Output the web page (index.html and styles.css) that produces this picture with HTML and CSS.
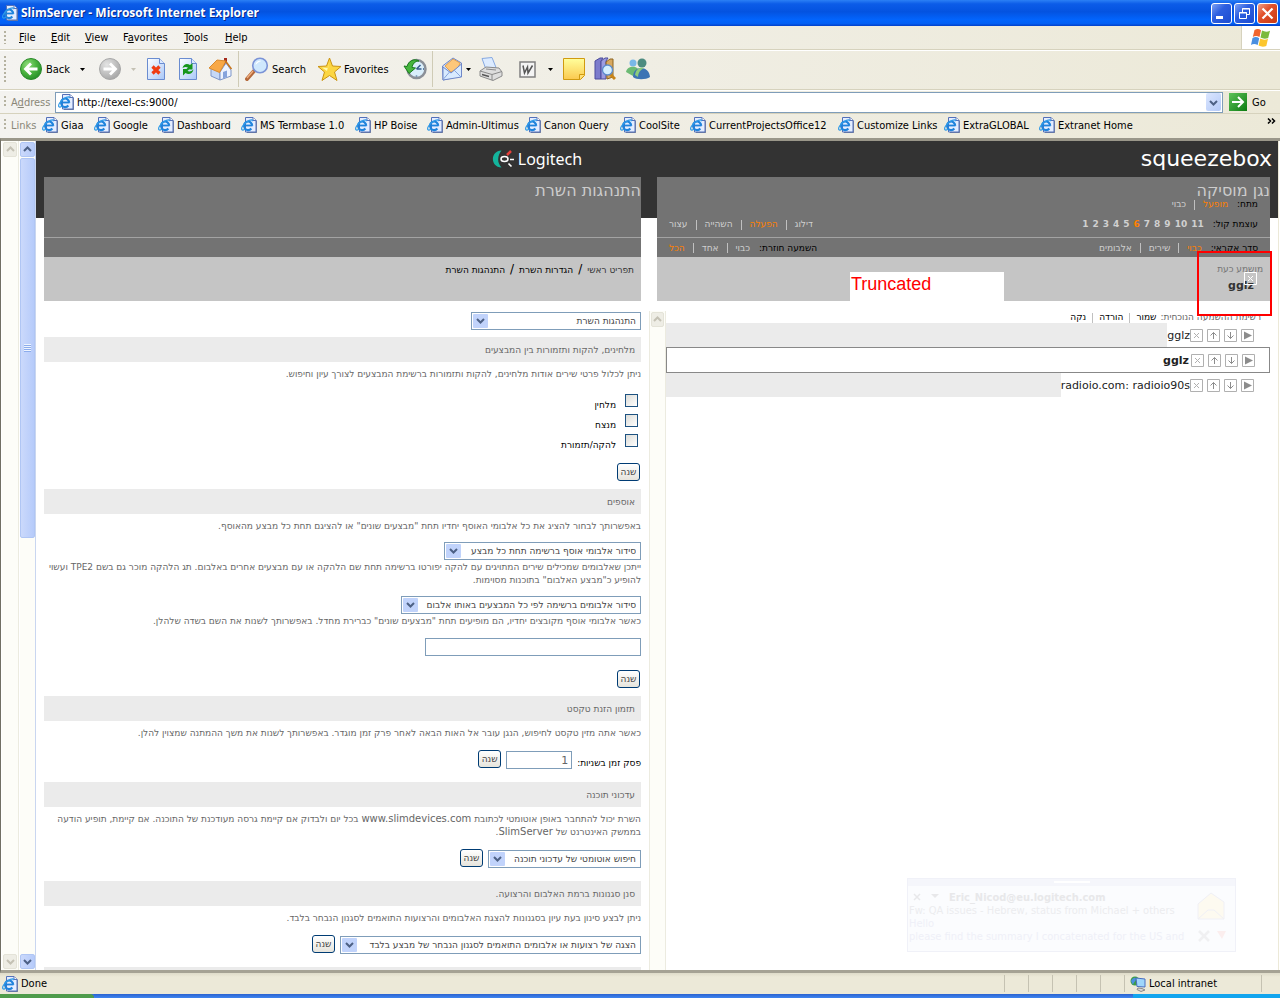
FILE: index.html
```html
<!DOCTYPE html>
<html lang="en">
<head>
<meta charset="utf-8">
<title>SlimServer - Microsoft Internet Explorer</title>
<link rel="stylesheet" href="styles.css">
</head>
<body>
<svg class="defs" aria-hidden="true">
  <defs>
    <linearGradient id="gBlue" x1="0" y1="0" x2="1" y2="1"><stop offset="0" stop-color="#fff"/><stop offset="1" stop-color="#a9c8f8"/></linearGradient>
    <radialGradient id="gGreen" cx=".35" cy=".3" r=".8"><stop offset="0" stop-color="#8fdc7c"/><stop offset=".5" stop-color="#4cb440"/><stop offset="1" stop-color="#1f8a24"/></radialGradient>
    <radialGradient id="gGray" cx=".35" cy=".3" r=".8"><stop offset="0" stop-color="#e4e4e4"/><stop offset="1" stop-color="#a2a2a2"/></radialGradient>
    <linearGradient id="gGold" x1="0" y1="0" x2="0" y2="1"><stop offset="0" stop-color="#ffff9c"/><stop offset="1" stop-color="#fbc94f"/></linearGradient>
    <linearGradient id="gGo" x1="0" y1="0" x2="1" y2="1"><stop offset="0" stop-color="#5fc25b"/><stop offset="1" stop-color="#0b7c10"/></linearGradient>
    <symbol id="ie" viewBox="0 0 16 16">
      <path d="M5.500.5h7l3 3v12h-10z" transform="translate(.4 .4)" fill="#6f7a9a"/>
      <path d="M4.500.5h7.500l3 3v11.500H4.500z" fill="#e4edff" stroke="#5470b8"/>
      <path d="M12 .5v3h3" fill="#fff" stroke="#5470b8"/>
      <path d="M3 8.500h8.500" stroke="#1f83dc" stroke-width="1.800"/>
      <path d="M11.200 8.800A4.100 4.300 0 1 0 10.300 11.500" fill="none" stroke="#1f83dc" stroke-width="2.200"/>
      <path d="M11 4.100C13 2.500 9.500 2.300 5.800 4.800 2.300 7.200-.2 11 .9 12.600c.6.900 2 .3 3-.3" fill="none" stroke="#2f9ae8" stroke-width="1.200"/>
    </symbol>
    <symbol id="up" viewBox="0 0 9 9"><path d="M1 6l3.500-3.500L8 6" fill="none" stroke="currentColor" stroke-width="2"/></symbol>
    <symbol id="down" viewBox="0 0 9 9"><path d="M1 3l3.500 3.500L8 3" fill="none" stroke="currentColor" stroke-width="2"/></symbol>
    <symbol id="caret" viewBox="0 0 5 3"><path d="M0 0h5L2.500 3z" fill="currentColor"/></symbol>
    <symbol id="tX" viewBox="0 0 13 13"><path d="M.5.5h12v12H.5zM4 4l5 5M9 4L4 9" fill="none" stroke="currentColor"/></symbol>
    <symbol id="tUp" viewBox="0 0 13 13"><path d="M.5.5h12v12H.5z" fill="none" stroke="#b0b0b0"/><path d="M6.500 10V3.500M3.500 6.500l3-3 3 3" fill="none" stroke="#8c8c8c"/></symbol>
    <symbol id="tDown" viewBox="0 0 13 13"><path d="M.5.5h12v12H.5z" fill="none" stroke="#b0b0b0"/><path d="M6.500 3v6.500M3.500 6.500l3 3 3-3" fill="none" stroke="#8c8c8c"/></symbol>
    <symbol id="tPlay" viewBox="0 0 13 13"><path d="M.5.5h12v12H.5z" fill="none" stroke="#b0b0b0"/><path d="M3 2.500L11 6.500 3 10.500z" fill="#8c8c8c"/></symbol>
  </defs>
</svg>
<div class="window">
  <header class="titlebar">
    <svg class="i16"><use href="#ie"/></svg>
    <h1>SlimServer - Microsoft Internet Explorer</h1>
    <button class="cap" aria-label="Minimize"><svg width="19" height="19"><path d="M4 12h7v3H4z" fill="#fff"/></svg></button>
    <button class="cap" aria-label="Restore"><svg width="19" height="19"><path d="M7.500 8V4.500h7v6H12M7 5h8" fill="none" stroke="#fff"/><path d="M4.500 8.500h7v6h-7zM4 9h8" fill="none" stroke="#fff"/></svg></button>
    <button class="cap close" aria-label="Close"><svg width="19" height="19"><path d="M4.500 4.500l10 10M14.500 4.500l-10 10" stroke="#fff" stroke-width="2.200"/></svg></button>
  </header>
  <nav class="menubar">
    <i class="grip"></i>
    <div class="menus">
      <a href="#"><u>F</u>ile</a><a href="#"><u>E</u>dit</a><a href="#"><u>V</u>iew</a><a href="#">F<u>a</u>vorites</a><a href="#"><u>T</u>ools</a><a href="#"><u>H</u>elp</a>
    </div>
    <div class="flag"><svg width="22" height="20" viewBox="0 0 22 20">
      <path d="M4.500 2Q8 0 11 2.200L9.500 9Q6 7 2.800 9z" fill="#f0642d"/><path d="M12 2.600q4 2 8 .2L18.200 10q-4 1.600-7.700-.4z" fill="#7cba3c"/>
      <path d="M2.500 10Q6 8 9.200 10.200L7.700 17Q4 15 1 17z" fill="#4a8fe0"/><path d="M10.200 10.600q4 2 7.800.2L16.300 18q-4 1.600-7.700-.4z" fill="#fcc62c"/></svg></div>
  </nav>
  <div class="toolbar">
    <i class="grip"></i>
    <div class="tools">
      <button><svg width="24" height="24"><circle cx="12" cy="12" r="10.500" fill="url(#gGreen)" stroke="#2b8a2b"/><path d="M18.500 12H7M12 6.500L6.500 12l5.500 5.500" fill="none" stroke="#fff" stroke-width="2.800"/></svg>Back</button>
      <button class="mid" aria-label="Back list"><svg class="car"><use href="#caret"/></svg></button>
      <button class="mid" aria-label="Forward"><svg width="24" height="24"><circle cx="12" cy="12" r="10.500" fill="url(#gGray)" stroke="#a8a8a8"/><path d="M5.500 12H17M12 6.500l5.500 5.500-5.500 5.500" fill="none" stroke="#fff" stroke-width="2.800"/></svg></button>
      <button class="mid off" aria-label="Forward list"><svg class="car"><use href="#caret"/></svg></button>
      <button class="mid" aria-label="Stop"><svg width="20" height="24"><path d="M1.500 1.500h12l5 5v16h-17z" fill="url(#gBlue)" stroke="#6a8cd0"/><path d="M13.500 1.500v5h5" fill="#dbe8ff" stroke="#6a8cd0"/><path d="M6.500 9.500l7 7M13.500 9.500l-7 7" stroke="#f03c12" stroke-width="3.200"/></svg></button>
      <button class="mid" aria-label="Refresh"><svg width="20" height="24"><path d="M1.500 1.500h12l5 5v16h-17z" fill="url(#gBlue)" stroke="#6a8cd0"/><path d="M13.500 1.500v5h5" fill="#dbe8ff" stroke="#6a8cd0"/><path d="M4.500 11c1-4.500 5-5 7.500-3l2.500-2v6.500H8l2-2c-2-1-3.500-.5-5.500.5zM15.500 12.500c-1 4.500-5 5.500-8 3.500L5 18.500V12h6.500l-2 2c2 1 4 .5 6-1.500z" fill="#17961c"/></svg></button>
      <button class="mid" aria-label="Home"><svg width="24" height="24"><path d="M16 1h3v7h-3z" fill="#a52b1c"/><path d="M3 11l9 4v8l-9-4z" fill="#c6d8f6" stroke="#7d95c8"/><path d="M12 15l6-9 5 7v6l-11 4z" fill="#eef4ff" stroke="#7d95c8"/><path d="M1 11L9 3l9 1-6.500 11.500z" fill="#f8a846" stroke="#d88a30"/><path d="M17.500 4l6 8" stroke="#c87418" stroke-width="1.500"/><path d="M15 15l4-1.500V20l-4 1.500z" fill="#86a4dc"/></svg></button>
      <i class="sep"></i>
      <button class="pad"><svg width="24" height="24"><path d="M2 22l7-8" stroke="#b4683a" stroke-width="4" stroke-linecap="round"/><path d="M2 21l6-7" stroke="#f0b080" stroke-width="1.300"/><circle cx="15" cy="8.500" r="7.300" fill="#cfe8fd" stroke="#7b93d6" stroke-width="1.600"/><path d="M10.500 8c0-3 3-5 6-4-2 .5-4 1.500-6 4z" fill="#fff"/></svg>Search</button>
      <button class="pad star"><svg width="25" height="25"><path d="M12.500 1l3 8 8.500.5-6.500 5.500 2.500 8.500-7.500-5-7.500 5L7.500 15 1 9.500l8.500-.5z" fill="#fcd642" stroke="#cb9413"/><path d="M12.500 4l-1.500 7-6-.5 5 3.500z" fill="#fffbb0"/></svg>Favorites</button>
      <button class="mid" aria-label="History"><svg width="24" height="24"><circle cx="13.500" cy="12" r="9" fill="#d9eefb" stroke="#8b9098" stroke-width="2.500"/><path d="M13.500 12l4-4M13.500 12h5M13.500 18.500v1M20 12h1" stroke="#345c8c" stroke-width="1.500"/><path d="M1 9l3 .5C5.500 4 11 1 16 4c-4 0-6.500 3-7 6.500l3.500.5L6 16.500z" fill="#45b53d" stroke="#187a1c"/></svg></button>
      <i class="sep"></i>
      <button class="end" aria-label="Mail"><svg width="22" height="24"><path d="M1.500 9L12 1l8.500 5v13L2 23z" fill="#cfe0fb" stroke="#6f87c8"/><path d="M4 9l8-7 7 4-2 5-7 4z" fill="#fdc77a" stroke="#e0a050"/><path d="M2 10l8 6L20.500 7v13L2 23z" fill="#d8eaff" stroke="#6f87c8"/><path d="M2 22.500l7-8M20 20l-7-7" stroke="#86a4dc"/></svg></button>
      <button class="mid" aria-label="Mail list"><svg class="car"><use href="#caret"/></svg></button>
      <button class="mid" aria-label="Print"><svg width="24" height="24"><path d="M3 1.500l10-1 4 10-10 2z" fill="#dcebff" stroke="#86a8e0"/><path d="M1 14l6-4 13 1 3 4v4l-9 4.500L1 19z" fill="#dedede" stroke="#8a8a8a"/><path d="M1 14l12 3.500 10-3M13 17.500V23M7 12l10 1" fill="none" stroke="#8a8a8a"/><path d="M3 17.500l7 2" stroke="#555" stroke-width="1.500"/></svg></button>
      <button class="mid" aria-label="Edit with Word"><svg width="17" height="17"><path d="M1 1h15v15H1z" fill="#f4f4f4" stroke="#808080" stroke-width="1.500"/><path d="M4 4.500l1.500 7.500 3-6 .5 6 4.500-7.500" fill="none" stroke="#555" stroke-width="1.500"/></svg></button>
      <button class="mid" aria-label="Edit list"><svg class="car"><use href="#caret"/></svg></button>
      <button class="mid" aria-label="Discuss"><svg width="22" height="22"><path d="M.5.5h21v17l-4 4H.5z" fill="url(#gGold)" stroke="#d09a10"/><path d="M21.500 16.500h-5v5" fill="#ffe27a" stroke="#d09a10"/></svg></button>
      <button class="mid" aria-label="Research"><svg width="22" height="24"><path d="M1 4l5-3h3L7 4v18H1z" fill="#7c7ccc" stroke="#4c4c9c"/><path d="M7 4l4-3h3l-2 3v18H7z" fill="#9c9ce0" stroke="#4c4c9c"/><path d="M12 5l4-3h3v18l-6 2z" fill="#d8a860" stroke="#8c6420"/><path d="M16 17l5 5" stroke="#c88418" stroke-width="3"/><circle cx="13.500" cy="13" r="5" fill="#d4efff" stroke="#5c8ccc" stroke-width="1.300"/></svg></button>
      <button class="mid" aria-label="Messenger"><svg width="24" height="24"><circle cx="7" cy="6" r="3.500" fill="#79b8e8"/><path d="M0 15c1-7 13-7 13 0l-6 4z" fill="#6cba74"/><circle cx="16" cy="6" r="4.500" fill="#4d8c80"/><path d="M7 20c0-12 16-12 17 0-4 3-14 3-17 0z" fill="#3c74b4"/><path d="M9 18c1-7 6-8 9-7-4 2-6 5-6 9z" fill="#8ccc7c"/></svg></button>
    </div>
  </div>
  <form class="address">
    <i class="grip"></i>
    <label for="url">A<u>d</u>dress</label>
    <div class="urlbox"><svg class="i16"><use href="#ie"/></svg><input id="url" type="text" value="http://texel-cs:9000/"><button type="button" class="drop" aria-label="Show addresses"><svg width="9" height="9"><use href="#down"/></svg></button></div>
    <button type="button" class="go"><svg width="18" height="18"><path d="M0 0h18v18H0z" fill="url(#gGo)"/><path d="M3 9h10M9 4l5 5-5 5" fill="none" stroke="#fff" stroke-width="2"/></svg>Go</button>
  </form>
  <nav class="linksbar">
    <i class="grip"></i><span class="dim">Links</span>
    <div class="links">
      <a href="#"><svg class="i16"><use href="#ie"/></svg>Giaa</a>
      <a href="#"><svg class="i16"><use href="#ie"/></svg>Google</a>
      <a href="#"><svg class="i16"><use href="#ie"/></svg>Dashboard</a>
      <a href="#"><svg class="i16"><use href="#ie"/></svg>MS Termbase 1.0</a>
      <a href="#"><svg class="i16"><use href="#ie"/></svg>HP Boise</a>
      <a href="#"><svg class="i16"><use href="#ie"/></svg>Admin-Ultimus</a>
      <a href="#"><svg class="i16"><use href="#ie"/></svg>Canon Query</a>
      <a href="#"><svg class="i16"><use href="#ie"/></svg>CoolSite</a>
      <a href="#"><svg class="i16"><use href="#ie"/></svg>CurrentProjectsOffice12</a>
      <a href="#"><svg class="i16"><use href="#ie"/></svg>Customize Links</a>
      <a href="#"><svg class="i16"><use href="#ie"/></svg>ExtraGLOBAL</a>
      <a href="#"><svg class="i16"><use href="#ie"/></svg>Extranet Home</a>
    </div>
    <button class="more" aria-label="More links"><svg width="9" height="6"><path d="M1 .5L3.500 3 1 5.500M5 .5L7.500 3 5 5.500" fill="none" stroke="#000" stroke-width="1.500"/></svg></button>
  </nav>

  <main class="view">
    <div class="sb off"><button aria-label="Scroll up"><svg width="9" height="9"><use href="#up"/></svg></button><div class="track"></div><button aria-label="Scroll down"><svg width="9" height="9"><use href="#down"/></svg></button></div>
    <div class="sb on"><button aria-label="Scroll up"><svg width="9" height="9"><use href="#up"/></svg></button><div class="track"><div class="thumb"><i></i></div></div><button aria-label="Scroll down"><svg width="9" height="9"><use href="#down"/></svg></button></div>

    <div class="page" lang="he">
      <div class="brand">
        <div class="logi"><svg width="24" height="18" viewBox="0 0 24 18"><path d="M9.500.5C-2 1-2 17 9.500 17.500 7 14.500 6 12 6.200 9 6.300 6 7.500 3 9.500.5z" fill="#14b49c"/><ellipse cx="12.500" cy="9" rx="3.500" ry="2.500" fill="none" stroke="#fff" stroke-width="1.500"/><path d="M15 5l4-4" stroke="#e8413c" stroke-width="2.500"/><path d="M18 9.500h4M16.500 13.500l3 3" stroke="#fff" stroke-width="1.600"/></svg><span>Logitech</span></div>
        <div class="sqz">squeezebox</div>
      </div>
      <div class="heads">
        <section class="head" dir="rtl">
          <div class="upper"><h2>התנהגות השרת</h2></div>
          <div class="strip"></div>
          <nav class="crumbs"><a href="#">תפריט ראשי</a><i>/</i><b>הגדרות השרת</b><i>/</i><b>התנהגות השרת</b></nav>
        </section>
        <section class="head" dir="rtl">
          <div class="upper"><h2>נגן מוסיקה</h2>
            <div class="opts"><span>מתח:</span><a class="hot" href="#">מופעל</a><i></i><a href="#">כבוי</a></div>
            <div class="pair">
              <div class="opts"><span>עוצמת קול:</span><div class="vol" dir="ltr"><a href="#">1</a><a href="#">2</a><a href="#">3</a><a href="#">4</a><a href="#">5</a><a class="hot" href="#">6</a><a href="#">7</a><a href="#">8</a><a href="#">9</a><a href="#">10</a><a href="#">11</a></div></div>
              <div class="opts"><a href="#">דילוג</a><i></i><a class="hot" href="#">הפעלה</a><i></i><a href="#">השהייה</a><i></i><a href="#">עצור</a></div>
            </div>
          </div>
          <div class="strip pair">
            <div class="opts"><span>סדר אקראי:</span><a class="hot" href="#">כבוי</a><i></i><a href="#">שירים</a><i></i><a href="#">אלבומים</a></div>
            <div class="opts"><span>השמעה חוזרת:</span><a href="#">כבוי</a><i></i><a href="#">אחד</a><i></i><a class="hot" href="#">הכל</a></div>
          </div>
          <div class="now"><p>מושמע כעת</p><strong>gglz</strong><svg class="nowx"><use href="#tX"/></svg><div class="note" dir="ltr">Truncated</div></div>
        </section>
      </div>
      <div class="bodies">
        <form class="settings" dir="rtl">
          <select class="dd w170" aria-label="עמוד"><option>התנהגות השרת</option></select>
          <h3>מלחינים, להקות ותזמורות בין המבצעים</h3>
          <p>ניתן לכלול פרטי שירים אודות מלחינים, להקות ותזמורות ברשימת המבצעים לצורך עיון וחיפוש.</p>
          <div class="checks">
            <label><input type="checkbox">מלחין</label>
            <label><input type="checkbox">מנצח</label>
            <label><input type="checkbox">להקה/תזמורת</label>
          </div>
          <button type="button" class="btn">שנה</button>
          <h3>אוספים</h3>
          <p>באפשרותך לבחור להציג את כל אלבומי האוסף יחדיו תחת "מבצעים שונים" או להציגם תחת כל מבצע מהאוסף.</p>
          <select class="dd w197" aria-label="אוספים"><option>סידור אלבומי אוסף ברשימה תחת כל מבצע</option></select>
          <p class="tight">ייתכן שאלבומים שמכילים שירים המתויגים עם להקה יפורטו ברשימה תחת שם הלהקה או עם מבצעים אחרים באלבום. תג הלהקה מוכר גם בשם TPE2 ועשוי להופיע כ"מבצע האלבום" בתוכנות מסוימות.</p>
          <select class="dd w240" aria-label="אלבומים"><option>סידור אלבומים ברשימה לפי כל המבצעים באותו אלבום</option></select>
          <p class="tight">כאשר אלבומי אוסף מקובצים יחדיו, הם מופיעים תחת "מבצעים שונים" כברירת מחדל. באפשרותך לשנות את השם בשדה שלהלן.</p>
          <input class="field" type="text" aria-label="שם">
          <button type="button" class="btn">שנה</button>
          <h3>תזמון הזנת טקסט</h3>
          <p>כאשר אתה מזין טקסט לחיפוש, הנגן עובר אל האות הבאה לאחר פרק זמן מוגדר. באפשרותך לשנות את משך ההמתנה שמצוין להלן.</p>
          <div class="row"><label for="sec">פסק זמן בשניות:</label><input id="sec" class="num" type="text" value="1"><button type="button" class="btn">שנה</button></div>
          <h3>עדכוני תוכנה</h3>
          <p>השרת יכול להתחבר באופן אוטומטי לכתובת <bdi>www.slimdevices.com</bdi> בכל יום ולבדוק אם קיימת גרסה מעודכנת של התוכנה. אם קיימת, תופיע הודעה בממשק האינטרנט של <bdi>SlimServer</bdi>.</p>
          <div class="row"><select class="dd w153" aria-label="עדכוני תוכנה"><option>חיפוש אוטומטי של עדכוני תוכנה</option></select><button type="button" class="btn">שנה</button></div>
          <h3>סנן סגנונות ברמת האלבום והרצועה.</h3>
          <p>ניתן לבצע סינון בעת עיון בסגנונות להצגת האלבומים והרצועות התואמים לסגנון הנבחר בלבד.</p>
          <div class="row"><select class="dd w301" aria-label="סגנונות"><option>הצגה של רצועות או אלבומים התואמים לסגנון הנבחר של מבצע בלבד</option></select><button type="button" class="btn">שנה</button></div>
          <h3>&nbsp;</h3>
        </form>
        <div class="sb off inner"><button aria-label="Scroll up"><svg width="9" height="9"><use href="#up"/></svg></button><div class="track"></div><button aria-label="Scroll down"><svg width="9" height="9"><use href="#down"/></svg></button></div>
        <section class="playlist" dir="rtl">
          <div class="opts list"><span>רשימת ההשמעה הנוכחית:</span><a href="#">שמור</a><i></i><a href="#">הורדה</a><i></i><a href="#">נקה</a></div>
          <ul>
            <li><div class="ctl"><svg><use href="#tPlay"/></svg><svg><use href="#tDown"/></svg><svg><use href="#tUp"/></svg><svg><use href="#tX"/></svg></div><a href="#">gglz</a><i></i></li>
            <li class="cur"><div class="ctl"><svg><use href="#tPlay"/></svg><svg><use href="#tDown"/></svg><svg><use href="#tUp"/></svg><svg><use href="#tX"/></svg></div><a href="#">gglz</a></li>
            <li><div class="ctl"><svg><use href="#tPlay"/></svg><svg><use href="#tDown"/></svg><svg><use href="#tUp"/></svg><svg><use href="#tX"/></svg></div><a href="#">radioio.com: radioio90s</a><i></i></li>
          </ul>
        </section>
      </div>
      <div class="mark"></div>
      <aside class="toast" lang="en">
        <div class="tbar"></div>
        <div class="tbody">
          <div><div class="from"><svg width="26" height="9"><path d="M1 1l6 6M7 1L1 7" stroke="currentColor" stroke-width="1.500"/><path d="M18 1h8l-4 4z" fill="currentColor"/></svg>Eric_Nicod@eu.logitech.com</div>
          <p>Fw: QA issues - Hebrew, status from Michael + others</p><p class="pale">Hello</p><p class="pale">please find the summary I concatenated for the US and</p></div>
          <svg width="32" height="52"><path d="M3 13L16 2l13 9v17H3z" fill="#fdfaf0" stroke="#f0f0f6"/><path d="M3 28l10-9h6l10 9" fill="none" stroke="#f0f0f6"/><path d="M4 40l10 10M14 40L4 50" stroke="#f0f0f2" stroke-width="2.500"/><path d="M22 40h9l-4 8z" fill="#fbeeee"/></svg>
        </div>
      </aside>
    </div>
  </main>
  <footer class="status">
    <svg class="i16"><use href="#ie"/></svg><span>Done</span>
    <i></i><i></i><i></i><i></i><i></i>
    <div class="zone"><svg width="16" height="16"><circle cx="5" cy="5" r="4.500" fill="#3b9c46"/><path d="M1 5c2-4 5-4 5-2S3 7 3 9z" fill="#4a8fe0"/><path d="M6 2l9 1v8l-8-.5z" fill="#9fd6fb" stroke="#4a6ec0"/><path d="M8 12l4 .5 3 1.500-4 1.500-4-2z" fill="#d8d8d8" stroke="#888"/></svg>Local intranet</div>
  </footer>
  <div class="taskbar"><i class="start"></i><i class="tasks"></i><i class="tray"></i></div>
</div>
</body>
</html>
```
FILE: styles.css
```css
* { box-sizing: border-box; }
body { margin: 0; font: 11px/13px "DejaVu Sans Condensed", "DejaVu Sans", Tahoma, sans-serif; color: #000; }
h1, h2, h3, p, ul { margin: 0; padding: 0; font-weight: normal; }
a { color: inherit; text-decoration: none; }
button { border: 0; padding: 0; background: none; font: inherit; color: inherit; }
svg { display: block; flex: none; }
ul { list-style: none; }
.defs { position: absolute; width: 0; height: 0; }
.i16 { width: 16px; height: 16px; }
.window { height: 100vh; display: flex; flex-direction: column; overflow: hidden; background: #ece9d8; }

.titlebar { flex: none; height: 26px; display: flex; align-items: center; gap: 2px; padding: 0 2px; background: linear-gradient(#2b80f5, #0c5ce8 15%, #0453e0 45%, #0264fc 75%, #0360f5 90%, #0340c8); }
.titlebar h1 { flex: 1; padding-left: 1px; font: bold 12px/16px "Open Sans", "Noto Sans", sans-serif; color: #fff; text-shadow: 1px 1px 0 #0a2a8a; }
.cap { width: 21px; height: 21px; border: 1px solid #fff; border-radius: 3px; background: linear-gradient(135deg, #7ea2f4, #2d5fe0 40%, #1c4bd0); }
.cap.close { background: linear-gradient(135deg, #f0a088, #e2512c 40%, #c83a14); }

.menubar, .toolbar, .address, .linksbar { flex: none; display: flex; align-items: center; padding-left: 4px; background: linear-gradient(90deg, #f4f3f0, #ece9d8); }
.menubar { height: 24px; border-bottom: 1px solid #d6d2bd; }
.grip { width: 2px; align-self: stretch; margin: 5px 0; background: repeating-linear-gradient(#b5b2a0 0 2px, transparent 2px 4px); }
.menus { flex: 1; padding-left: 13px; display: grid; grid-template-columns: 32px 34px 38px 61px 41px 60px; }
.flag { width: 39px; height: 23px; display: grid; place-items: center; background: #fff; border-left: 1px solid #d6d2bd; }
.toolbar { height: 40px; padding-bottom: 2px; border-top: 1px solid #fff; border-bottom: 1px solid #d6d2bd; }
.tools { flex: 1; padding-left: 9px; height: 36px; display: grid; grid-template-columns: 58px 18px 37px 10px 36px 28px 36px 1px 74px 84px 35px 1px 30px 10px 36px 36px 10px 38px 24px 42px; }
.tools button { display: flex; align-items: center; gap: 3px; padding-left: 4px; }
.tools .mid { justify-content: center; padding: 0; }
.tools .end { justify-content: flex-end; padding: 0; }
.tools .pad { padding-left: 6px; }
.tools .star { padding-left: 4px; gap: 2px; }
.tools .off { color: #c4c1b4; }
.car { width: 5px; height: 3px; }
.sep { background: #cfcbb6; }
.address { height: 23px; border-top: 1px solid #fff; }
.address label, .dim { color: #8a8778; padding-left: 5px; }
.address label { width: 49px; }
.urlbox { flex: 1; height: 21px; display: flex; align-items: center; padding: 0 1px 0 2px; background: #fff; border: 1px solid #7f9db9; }
.urlbox input { flex: 1; min-width: 0; padding: 0 0 0 3px; border: 0; font: inherit; }
.drop { width: 15px; height: 18px; display: grid; place-items: center; border-radius: 2px; color: #4d6185; background: linear-gradient(135deg, #dbe6fe, #b4caf8); }
.go { width: 57px; display: flex; align-items: center; gap: 5px; padding-left: 6px; }
.linksbar { height: 25px; padding-bottom: 2px; border-top: 1px solid #d6d2bd; }
.dim { width: 36px; }
.links { flex: 1; display: grid; grid-template-columns: 52px 64px 83px 114px 72px 98px 95px 70px 148px 106px 95px 1fr; white-space: nowrap; }
.links a { display: flex; align-items: center; gap: 3px; }
.more { align-self: flex-start; margin-top: 4px; width: 13px; }

.view { flex: 1; min-height: 0; display: flex; padding-left: 1px; border: solid; border-width: 3px 0 3px 1px; border-color: #9a978a transparent #a5a294 #716f64; background: #fff; }
.sb { flex: none; width: 17px; display: flex; flex-direction: column; gap: 1px; padding: 1px; background: #fdfdf8; border-right: 1px solid #ecebe0; }
.sb button { height: 15px; display: grid; place-items: center; border-radius: 2px; border: 1px solid #e4e3d8; background: #eeede5; color: #c4c1b4; }
.sb .track { flex: 1; }
.sb.on { width: 16px; margin-left: 1px; padding: 1px 0; border-right: 1px solid #c9d6f0; }
.sb.on button, .thumb { border: 1px solid #b0c6f4; background: linear-gradient(90deg, #cbd9fb, #b6cbfa); color: #4d6185; }
.thumb { height: 380px; display: grid; place-items: center; border-radius: 2px; }
.thumb i { width: 7px; height: 8px; background: repeating-linear-gradient(#eef4fe 0 1px, #8cacec 1px 2px); }

.page { flex: 1; min-width: 0; margin-right: 1px; position: relative; display: flex; flex-direction: column; font-family: "DejaVu Sans", Verdana, sans-serif; background: linear-gradient(#333 77px, #fff 77px); overflow: hidden; border-right: 1px solid #ece9d8; }
.brand { flex: none; height: 36px; padding: 0 8px; display: grid; grid-template-columns: 597fr 613fr; gap: 16px; color: #fff; align-items: center; }
.logi { display: flex; gap: 2px; align-items: center; padding-left: 75%; font: 16px/20px "Noto Sans", sans-serif; }
.sqz { justify-self: end; font-size: 22px; line-height: 24px; margin-right: -2px; }
.heads { flex: none; padding: 0 8px; display: grid; grid-template-columns: 597fr 613fr; gap: 16px; }
.head { font-size: 9px; line-height: 13px; }
.upper { height: 60px; background: #737373; color: #ccc; }
.upper h2 { font-size: 16px; line-height: 20px; height: 20px; padding-top: 4px; color: #ccc; }
.strip { height: 20px; background: #737373; border-top: 1px solid #a3a3a3; }
.pair { display: flex; justify-content: space-between; align-items: center; }
.opts { display: flex; align-items: center; padding: 1px 12px 0; color: #d0d0d0; }
.opts span { color: #000; margin-left: 9px; }
.opts > i { width: 1px; height: 10px; margin: 0 8px; background: #c0c0c0; }
.opts a.hot, .vol .hot { color: #ff8000; }
.upper .pair { height: 26px; }
.vol { display: flex; gap: 4px; font-weight: bold; }
.crumbs, .now { height: 44px; background: #c5c5c5; color: #000; }
.crumbs { padding: 6px 7px; }
.crumbs a { color: #333; }
.crumbs b { font-weight: normal; }
.crumbs i { margin: 0 5px; font-size: 12px; font-style: normal; }
.now { position: relative; padding: 6px 7px; color: #737373; }
.now strong { display: block; padding: 3px 9px 0; font-size: 11px; color: #333; }
.nowx { position: absolute; right: 13px; top: 15px; width: 13px; height: 13px; color: #fff; }
.note { position: absolute; right: 266px; top: 15px; width: 154px; height: 29px; padding: 3px 1px; background: #fff; color: #f00; font: 18px/18px "Liberation Sans", Arial, sans-serif; }

.bodies { flex: 1; min-height: 0; padding: 0 8px; display: grid; grid-template-columns: 597fr 8px 17px 604fr; overflow: hidden; }
.settings { display: flex; flex-direction: column; align-items: stretch; padding-top: 11px; color: #666; font-size: 9px; line-height: 13px; }
.settings > * { flex: none; }
.settings h3 { height: 25px; padding: 6px; background: #ebebeb; font-size: 9px; line-height: 15px; color: #666; }
.settings p { margin: 6px 0 9px; min-height: 13px; }
.settings p.tight { margin-top: 1px; }
.settings bdi { font-size: 10px; line-height: 12px; }
.settings > .dd, .settings > .btn, .settings > .field { align-self: flex-start; }
.dd { appearance: none; height: 18px; padding: 0 4px; border: 1px solid #7f9db9; border-radius: 0; color: #444; font: 9px/15px "DejaVu Sans", sans-serif;
  background: url("data:image/svg+xml,%3Csvg xmlns='http://www.w3.org/2000/svg' width='15' height='14'%3E%3Crect width='15' height='14' rx='1' fill='%23c1d3fb'/%3E%3Cpath d='M4 5l3.500 3.500L11 5' fill='none' stroke='%234d6185' stroke-width='2'/%3E%3C/svg%3E") 1px 1px no-repeat #fff; }
.w170 { width: 170px; margin-bottom: 7px; }
.w197 { width: 197px; }
.w240 { width: 240px; }
.w153 { width: 153px; }
.w301 { width: 301px; }
.checks { margin-top: 4px; }
.checks label { display: flex; height: 20px; align-items: flex-start; padding-top: 5px; color: #000; }
.checks input { appearance: none; width: 13px; height: 13px; margin: -5px 3px 0 9px; border: 1px solid #1d5281; background: linear-gradient(135deg, #dcdcd7, #fff); }
.btn { width: 23px; height: 18px; border: 1px solid #003c74; border-radius: 3px; background: linear-gradient(#fff, #e6e4dc); font-size: 9px; line-height: 14px; color: #444; }
.settings > .btn { margin: 9px 1px 8px; }
.field { width: 216px; height: 18px; margin: 1px 0 5px; border: 1px solid #7f9db9; }
.row { display: flex; gap: 5px; height: 19px; margin: 1px 0 13px; }
.row .btn { flex: none; }
.row .dd, .num { margin-top: 1px; }
.row label { padding-top: 7px; color: #000; }
.num { width: 66px; height: 18px; padding: 0 3px; border: 1px solid #7f9db9; font: 11px/15px "DejaVu Sans", sans-serif; color: #666; }
.inner { grid-column: 3; margin-top: 10px; border-left: 1px solid #ecebe0; }
.playlist { font-size: 11px; }
.opts.list { height: 22px; padding: 11px 9px 0; font-size: 9px; color: #000; }
.list span { color: #666; margin-left: 4px; }
.list > i { margin: 0 6px; }
.playlist li { display: flex; height: 24px; align-items: center; padding-right: 16px; }
.playlist li > a { color: #222; }
.playlist li > i { flex: 1; align-self: stretch; background: #ebebeb; }
.ctl { display: flex; gap: 4px; color: #b0b0b0; }
.ctl svg { width: 13px; height: 13px; }
.playlist .cur { height: 26px; padding-right: 14px; border: 1px solid #888; }
.playlist .cur a { font-weight: bold; padding-right: 2px; }
.mark { position: absolute; right: 6px; top: 110px; width: 75px; height: 65px; border: 2px solid #f00; }
.toast { position: absolute; right: 42px; bottom: 18px; width: 329px; height: 74px; border: 1px solid #f0f1f8; background: #fbfcfe; font: 11px/13px "DejaVu Sans Condensed", sans-serif; color: #ececef; }
.tbar { height: 7px; background: #f5f6fb radial-gradient(#fff, #fff) 50% 2px / 36px 2px no-repeat; }
.tbody { display: flex; justify-content: space-between; padding: 5px 8px 0 1px; white-space: nowrap; }
.from { display: flex; align-items: center; gap: 10px; padding-left: 4px; font-weight: bold; color: #e8e8ea; }
.pale { color: #eff0f8; }

.status { flex: none; height: 21px; display: flex; align-items: center; padding-left: 2px; background: linear-gradient(#dedbc9, #ece9d8 4px); }
.status span { flex: 1; padding-left: 3px; }
.status > i { width: 24px; height: 17px; border-left: 1px solid #c5c2b2; }
.zone { width: 156px; height: 17px; display: flex; align-items: center; gap: 3px; padding-left: 5px; border-left: 1px solid #c5c2b2; background: linear-gradient(#c5c2b2, #c5c2b2) 136px 0 / 1px 17px no-repeat; }
.taskbar { flex: none; height: 4px; display: flex; background: #2f6fe0; }
.start { width: 94px; background: #4f9c4c; border-radius: 0 4px 0 0; }
.tasks { flex: 1; background: linear-gradient(#2a62d0, #3f86f0); }
.tray { width: 147px; background: #12a5ee; }
```
